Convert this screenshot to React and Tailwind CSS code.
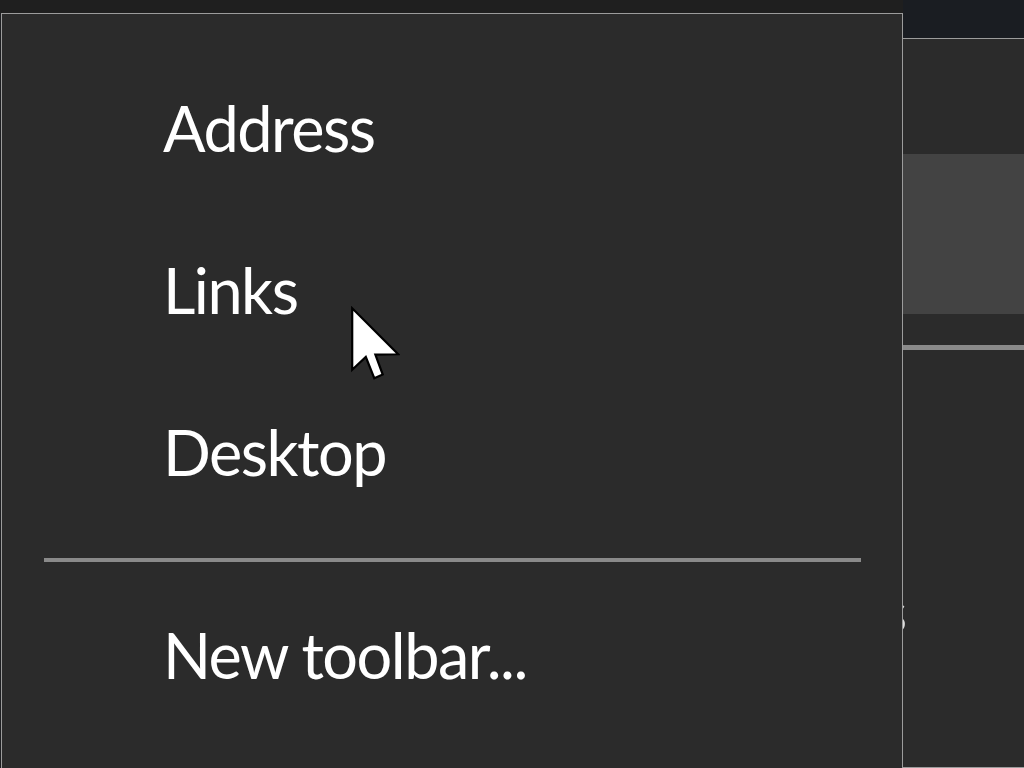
import React from "react";

const font = { fontFamily: 'Lato, "Noto Sans", sans-serif' };

function Item({ children, h = "h-[162px]" }) {
  return (
    <div className={`${h} flex items-center pl-[161px] text-[63px] leading-none tracking-[-1.5px] text-white`}>
      <span className="-mt-[6px]">{children}</span>
    </div>
  );
}

export default function App() {
  return (
    <div className="relative flex h-[768px] w-[1024px] overflow-hidden bg-[#1e1f22]" style={font}>
      {/* context menu column */}
      <div className="flex w-[903px] flex-col">
        <div className="h-[13px] bg-[#1f1f1f]" />
        <div className="ml-px flex flex-1 flex-col border-l border-r border-t border-[#9c9c9c] bg-[#2b2b2b]">
          <div className="h-[35px]" />
          <Item>Address</Item>
          <Item>Links</Item>
          <Item>Desktop</Item>
          <div className="mt-[23px] mb-[14px] ml-[42px] h-[4px] w-[817px] bg-[#8a8a8a]" />
          <Item>New toolbar...</Item>
        </div>
      </div>

      {/* window behind, right side */}
      <div className="flex flex-1 flex-col">
        <div className="h-[38px] bg-[#1a1d22]" />
        <div className="flex flex-1 flex-col border-b border-t border-[#9c9c9c] bg-[#2b2b2b]">
          <div className="h-[115px]" />
          <div className="h-[160px] bg-[#434343]" />
          <div className="h-[31px]" />
          <div className="h-[5px] bg-[#8a8a8a]" />
          <div className="flex-1 overflow-hidden pt-[232px]">
            <div className="-ml-[21px] text-[58px] leading-none text-[#dddddd]">s</div>
          </div>
        </div>
      </div>

      {/* mouse pointer */}
      <svg
        className="absolute left-[350px] top-[306px]"
        width="50"
        height="76"
        viewBox="-0.6 -0.6 13.6 20.6"
      >
        <path
          d="M0 0 L0 16.7 L3.7 13.2 L6 19 L8.3 18 L6.3 12.6 L12.5 12.5 Z"
          fill="#ffffff"
          stroke="#000000"
          strokeWidth="0.6"
          strokeLinejoin="miter"
        />
      </svg>
    </div>
  );
}
